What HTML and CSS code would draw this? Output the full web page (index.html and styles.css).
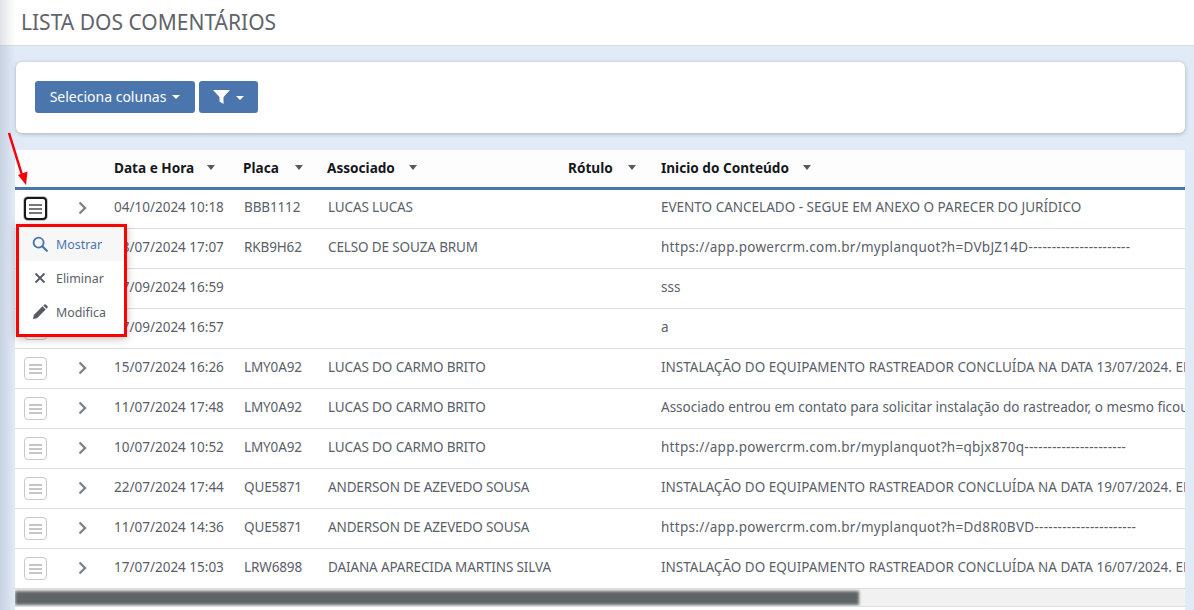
FILE: index.html
```html
<!DOCTYPE html>
<html lang="pt">
<head>
<meta charset="utf-8">
<title>Lista dos comentários</title>
<link rel="stylesheet" href="styles.css">
</head>
<body>
<header class="page-head"><h1>LISTA DOS COMENTÁRIOS</h1></header>
<main class="content">
  <section class="card">
    <button class="btn">Seleciona colunas<span class="caret"></span></button>
    <button class="btn btn-filter" aria-label="Filtro">
      <svg width="17" height="14" viewBox="0 0 17 14"><path d="M0 0h17l-6.500 7v7l-4-2.600V7z" fill="#fff"/></svg><span class="caret"></span>
    </button>
  </section>
  <section class="table-box">
    <div class="table-scroll">
      <div class="row head">
        <div></div><div></div>
        <div class="th nudge">Data e Hora<span class="sort s1"></span></div>
        <div class="th">Placa<span class="sort s2"></span></div>
        <div class="th">Associado<span class="sort s3"></span></div>
        <div class="th nudge">Rótulo<span class="sort s4"></span></div>
        <div class="th nudge">Inicio do Conteúdo<span class="sort s5"></span></div>
      </div>
      <div class="row">
        <div class="c-btn"><span class="menu-btn active"><i></i><i></i><i></i></span></div>
        <div class="c-chev"><svg class="chev" width="9" height="14" viewBox="0 0 9 14"><path d="M1.500 1.500 7 7l-5.500 5.500" /></svg></div>
        <div class="t">04/10/2024 10:18</div><div class="t">BBB1112</div><div class="t">LUCAS LUCAS</div><div class="t"></div>
        <div class="t">EVENTO CANCELADO - SEGUE EM ANEXO O PARECER DO JURÍDICO</div>
      </div>
      <div class="row">
        <div class="c-btn"><span class="menu-btn"><i></i><i></i><i></i></span></div>
        <div class="c-chev"><svg class="chev" width="9" height="14" viewBox="0 0 9 14"><path d="M1.500 1.500 7 7l-5.500 5.500" /></svg></div>
        <div class="t">18/07/2024 17:07</div><div class="t">RKB9H62</div><div class="t">CELSO DE SOUZA BRUM</div><div class="t"></div>
        <div class="t url">https://app.powercrm.com.br/myplanquot?h=DVbJZ14D----------------------</div>
      </div>
      <div class="row">
        <div class="c-btn"><span class="menu-btn"><i></i><i></i><i></i></span></div>
        <div class="c-chev"><svg class="chev" width="9" height="14" viewBox="0 0 9 14"><path d="M1.500 1.500 7 7l-5.500 5.500" /></svg></div>
        <div class="t">17/09/2024 16:59</div><div class="t"></div><div class="t"></div><div class="t"></div>
        <div class="t">sss</div>
      </div>
      <div class="row">
        <div class="c-btn"><span class="menu-btn"><i></i><i></i><i></i></span></div>
        <div class="c-chev"><svg class="chev" width="9" height="14" viewBox="0 0 9 14"><path d="M1.500 1.500 7 7l-5.500 5.500" /></svg></div>
        <div class="t">17/09/2024 16:57</div><div class="t"></div><div class="t"></div><div class="t"></div>
        <div class="t">a</div>
      </div>
      <div class="row">
        <div class="c-btn"><span class="menu-btn"><i></i><i></i><i></i></span></div>
        <div class="c-chev"><svg class="chev" width="9" height="14" viewBox="0 0 9 14"><path d="M1.500 1.500 7 7l-5.500 5.500" /></svg></div>
        <div class="t">15/07/2024 16:26</div><div class="t">LMY0A92</div><div class="t">LUCAS DO CARMO BRITO</div><div class="t"></div>
        <div class="t">INSTALAÇÃO DO EQUIPAMENTO RASTREADOR CONCLUÍDA NA DATA 13/07/2024. EM ANEXO</div>
      </div>
      <div class="row">
        <div class="c-btn"><span class="menu-btn"><i></i><i></i><i></i></span></div>
        <div class="c-chev"><svg class="chev" width="9" height="14" viewBox="0 0 9 14"><path d="M1.500 1.500 7 7l-5.500 5.500" /></svg></div>
        <div class="t">11/07/2024 17:48</div><div class="t">LMY0A92</div><div class="t">LUCAS DO CARMO BRITO</div><div class="t"></div>
        <div class="t wide">Associado entrou em contato para solicitar instalação do rastreador, o mesmo ficou</div>
      </div>
      <div class="row">
        <div class="c-btn"><span class="menu-btn"><i></i><i></i><i></i></span></div>
        <div class="c-chev"><svg class="chev" width="9" height="14" viewBox="0 0 9 14"><path d="M1.500 1.500 7 7l-5.500 5.500" /></svg></div>
        <div class="t">10/07/2024 10:52</div><div class="t">LMY0A92</div><div class="t">LUCAS DO CARMO BRITO</div><div class="t"></div>
        <div class="t url">https://app.powercrm.com.br/myplanquot?h=qbjx870q----------------------</div>
      </div>
      <div class="row">
        <div class="c-btn"><span class="menu-btn"><i></i><i></i><i></i></span></div>
        <div class="c-chev"><svg class="chev" width="9" height="14" viewBox="0 0 9 14"><path d="M1.500 1.500 7 7l-5.500 5.500" /></svg></div>
        <div class="t">22/07/2024 17:44</div><div class="t">QUE5871</div><div class="t">ANDERSON DE AZEVEDO SOUSA</div><div class="t"></div>
        <div class="t">INSTALAÇÃO DO EQUIPAMENTO RASTREADOR CONCLUÍDA NA DATA 19/07/2024. EM ANEXO</div>
      </div>
      <div class="row">
        <div class="c-btn"><span class="menu-btn"><i></i><i></i><i></i></span></div>
        <div class="c-chev"><svg class="chev" width="9" height="14" viewBox="0 0 9 14"><path d="M1.500 1.500 7 7l-5.500 5.500" /></svg></div>
        <div class="t">11/07/2024 14:36</div><div class="t">QUE5871</div><div class="t">ANDERSON DE AZEVEDO SOUSA</div><div class="t"></div>
        <div class="t url">https://app.powercrm.com.br/myplanquot?h=Dd8R0BVD----------------------</div>
      </div>
      <div class="row">
        <div class="c-btn"><span class="menu-btn"><i></i><i></i><i></i></span></div>
        <div class="c-chev"><svg class="chev" width="9" height="14" viewBox="0 0 9 14"><path d="M1.500 1.500 7 7l-5.500 5.500" /></svg></div>
        <div class="t">17/07/2024 15:03</div><div class="t">LRW6898</div><div class="t">DAIANA APARECIDA MARTINS SILVA</div><div class="t"></div>
        <div class="t">INSTALAÇÃO DO EQUIPAMENTO RASTREADOR CONCLUÍDA NA DATA 16/07/2024. EM ANEXO</div>
      </div>
    </div>
    <div class="scrollbar"><div class="thumb"></div></div>
    <div class="table-foot"></div>
  </section>
</main>
<div class="side-shade"></div>
<nav class="dropdown">
  <div class="item hover">
    <svg width="16" height="16" viewBox="0 0 16 16"><circle cx="6.600" cy="6.600" r="5" fill="none" stroke="#4a76ad" stroke-width="1.900"/><path d="m10.300 10.300 4.500 4.500" stroke="#4a76ad" stroke-width="2.200" stroke-linecap="round"/></svg>
    <span>Mostrar</span>
  </div>
  <div class="item">
    <svg width="16" height="16" viewBox="0 0 16 16"><path d="m3.500 3.500 9 9m0-9-9 9" stroke="#555c66" stroke-width="1.800"/></svg>
    <span>Eliminar</span>
  </div>
  <div class="item">
    <svg width="16" height="16" viewBox="0 0 16 16"><path d="M1 15l.8-4L10.500 2.300l3.200 3.200L5 14.200zM11.300 1.500l1-1a1 1 0 0 1 1.400 0l1.800 1.800a1 1 0 0 1 0 1.400l-1 1z" fill="#555c66"/></svg>
    <span>Modifica</span>
  </div>
</nav>
<svg class="arrow" width="32" height="60" viewBox="0 130 32 60"><path d="M9 133 22 175" stroke="#f5000a" stroke-width="2.500" fill="none"/><path d="M26 185 18 175 27.500 171.500z" fill="#f5000a"/></svg>
</body>
</html>
```

FILE: styles.css
```css
* { box-sizing: border-box; }
html, body { margin: 0; height: 100%; overflow: hidden; }
body {
  background: #e1eaf7;
  font-family: "Noto Sans", "Open Sans", sans-serif;
  color: #5a6069;
  position: relative;
}
.page-head {
  height: 46px;
  background: #fff;
  border-bottom: 1px solid #d9dde2;
  padding-left: 21px;
  display: flex;
  align-items: center;
}
.page-head h1 {
  margin: 0;
  font-size: 21px;
  font-weight: 400;
  color: #5f646b;
  line-height: 1;
}
.content { padding: 16px 9px 0 15px; }
.card {
  margin-left: 1px;
  height: 71px;
  background: #fff;
  border-radius: 6px;
  box-shadow: 0 1px 4px rgba(70, 70, 70, .35);
  padding: 19px 19px;
  display: flex;
  gap: 4px;
  align-items: flex-start;
}
.btn {
  height: 32px;
  width: 160px;
  border: 0;
  border-radius: 3px;
  background: #4a76ad;
  color: #fff;
  font: 400 14px "Noto Sans", sans-serif;
  display: flex;
  align-items: center;
  justify-content: center;
  padding: 0 0 2px;
}
.btn-filter { width: 59px; padding: 0; }
.caret {
  display: inline-block;
  margin: 2px 0 0 6px;
  border-left: 4px solid transparent;
  border-right: 4px solid transparent;
  border-top: 4px solid #fff;
}
.table-box { margin-top: 17px; background: #fff; }
.table-scroll { overflow: hidden; }
.row {
  display: grid;
  grid-template-columns: 47px 51px 130px 84px 240px 93px 1fr;
  height: 40px;
  align-items: center;
  border-bottom: 1px solid #dcdcdc;
  font-size: 13.500px;
  color: #5a6069;
  white-space: nowrap;
}
.row > div { min-width: 0; }
.row > .t { padding: 0 0 4px 1px; }
.row > .t:nth-child(4), .row > .t:nth-child(5) { letter-spacing: -.13px; }
.row > .t:last-child { overflow: hidden; }
.row > .url { letter-spacing: .28px; }
.row > .wide { letter-spacing: 0; }
.head {
  height: 40px;
  margin-bottom: -1px;
  border-bottom: 3px solid #4a76ad;
  background: #fdfdfd;
  padding-bottom: 3px;
  font-size: 13.600px;
}
.row > .th {
  position: relative;
  font-weight: 700;
  color: #15171c;
}
.row > .nudge { padding-left: 1px; }
.sort {
  position: absolute;
  top: 7px;
  border-left: 4.500px solid transparent;
  border-right: 4.500px solid transparent;
  border-top: 5px solid #595959;
}
.s1 { left: 94px; }
.s2 { left: 52px; }
.s3 { left: 82px; }
.s4 { left: 61px; }
.s5 { left: 143px; }
.row > .c-btn { padding-left: 9px; display: flex; }
.menu-btn {
  width: 23px;
  height: 23px;
  border: 1px solid #c8c8c8;
  border-radius: 4px;
  display: flex;
  flex-direction: column;
  align-items: center;
  justify-content: center;
  gap: 2px;
  background: #fff;
}
.menu-btn i {
  display: block;
  width: 13px;
  height: 2px;
  background: #c6c6c6;
}
.menu-btn.active {
  border: 2px solid #16181b;
  box-shadow: 0 0 0 1px #c4c4c4;
}
.menu-btn.active i { background: #777; }
.row > .c-chev { padding: 0 0 2px 16px; display: flex; }
.chev { fill: none; stroke: #7b838d; stroke-width: 2.400; }
.scrollbar { height: 17px; background: #f1f1f1; overflow: hidden; }
.thumb {
  width: 844px;
  height: 14px;
  margin-top: 2px;
  background: #5f6467;
  filter: blur(1.500px);
}
.table-foot { height: 10px; background: #fff; border-top: 1px solid #dedede; }
.side-shade {
  position: absolute;
  left: 0;
  top: 0;
  bottom: 0;
  width: 15px;
  background: linear-gradient(to right, rgba(100, 110, 130, .2), rgba(100, 110, 130, 0));
  pointer-events: none;
}
.dropdown {
  position: absolute;
  left: 16px;
  top: 224px;
  width: 111px;
  height: 113px;
  background: #fff;
  border: 3px solid #ff0000;
  box-shadow: 0 2px 8px rgba(0, 0, 0, .25);
}
.item {
  height: 34px;
  display: flex;
  align-items: center;
  gap: 8px;
  padding-left: 13px;
  font-size: 12.400px;
  color: #5a6069;
}
.item.hover { background: #f7f7f7; color: #4a76ad; }
.arrow { position: absolute; left: 0; top: 130px; }
```
